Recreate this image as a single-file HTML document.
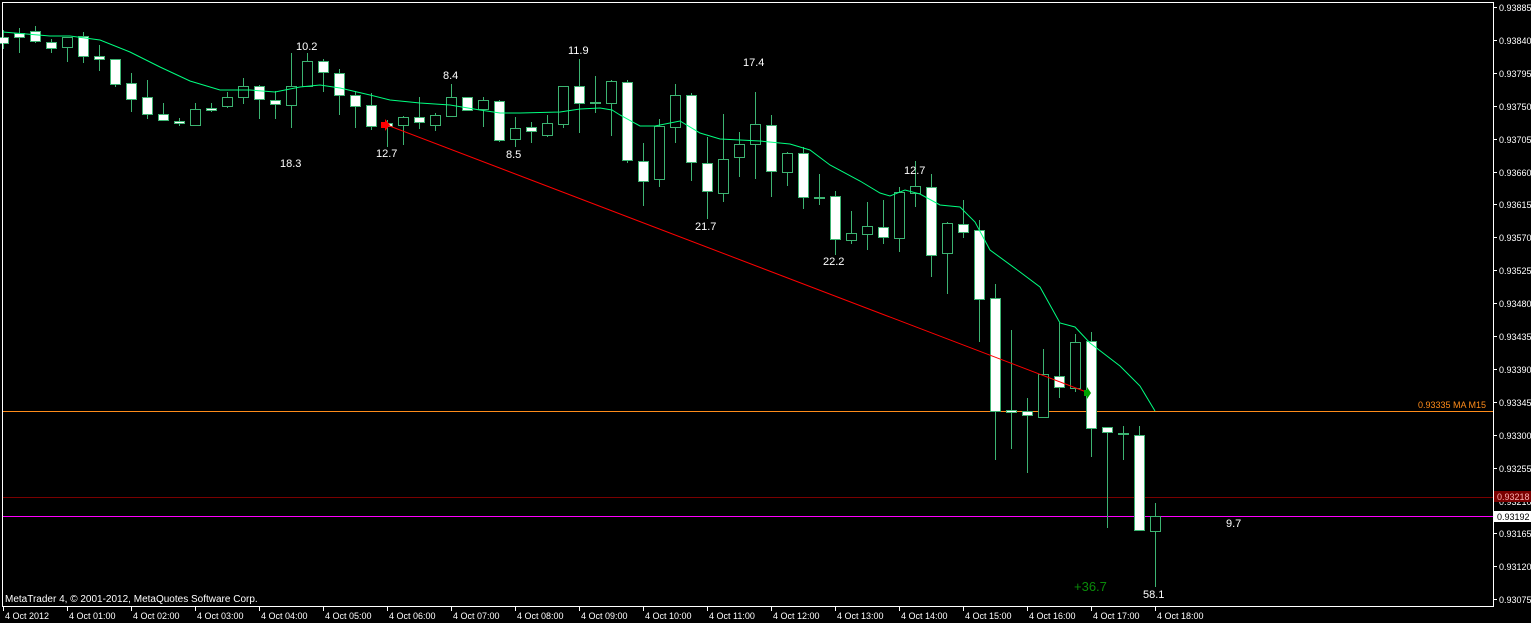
<!DOCTYPE html>
<html><head><meta charset="utf-8"><style>
html,body{margin:0;padding:0;background:#000;width:1531px;height:623px;overflow:hidden}
svg{display:block}
text{font-family:"Liberation Sans",sans-serif;}
</style></head><body>
<svg id="s" width="1531" height="623" xmlns="http://www.w3.org/2000/svg">
<rect width="1531" height="623" fill="#000"/>
<line x1="2" y1="411.5" x2="1493" y2="411.5" stroke="#ff8c1a" stroke-width="1"/>
<line x1="2" y1="497.5" x2="1493" y2="497.5" stroke="#7a0000" stroke-width="1"/>
<line x1="2" y1="516.5" x2="1493" y2="516.5" stroke="#ff00ff" stroke-width="1"/>
<g id="c"></g>
<polyline fill="none" stroke="#00ff80" stroke-width="1" points="3,32 50,36 70,36 100,40 130,52 160,67 190,81 220,90 250,90 275,92 300,87 320,85 340,88 370,95 390,100 420,103 450,105 480,110 500,113 520,113 560,112 580,109 600,108 612,110 620,115 640,126 655,126 680,121 700,133 720,139 740,140 760,141 790,144 810,150 830,165 860,181 880,193 890,196 905,190 920,194 940,205 960,207 975,222 990,250 1020,272 1040,287 1060,323 1075,327 1090,343 1120,366 1140,386 1155,411"/>
<line x1="387" y1="125" x2="1089" y2="393" stroke="#ff0000" stroke-width="1"/>
<path d="M381 122h4v-3l5 6-5 6v-3h-4z" fill="#ff0000"/>
<path d="M1084 390h3v-3l4 6-4 6v-3h-3z" fill="#00a000"/>
<g fill="#fff" font-size="11">
<text x="296" y="50">10.2</text><text x="280" y="167">18.3</text><text x="376" y="157">12.7</text>
<text x="443" y="79">8.4</text><text x="506" y="158">8.5</text><text x="568" y="54">11.9</text>
<text x="743" y="66">17.4</text><text x="695" y="230">21.7</text><text x="904" y="174">12.7</text>
<text x="823" y="265">22.2</text><text x="1226" y="527">9.7</text><text x="1143" y="598">58.1</text>
</g>
<text x="1074" y="591" fill="#0a8a0a" font-size="13">+36.7</text>
<text x="1418" y="408" fill="#ff8c1a" font-size="9">0.93335 MA M15</text>
<text x="5" y="602" fill="#fff" font-size="10">MetaTrader 4, © 2001-2012, MetaQuotes Software Corp.</text>
<rect x="2.5" y="2.5" width="1491" height="604" fill="none" stroke="#fff" stroke-width="1"/>
<g id="ax" fill="#fff" font-size="9"></g>
<rect x="1494" y="491" width="37" height="11" fill="#7a0000"/>
<text x="1497" y="500" fill="#ffb0b0" font-size="9">0.93218</text>
<rect x="1494" y="511" width="37" height="11" fill="#fff"/>
<text x="1497" y="520" fill="#000" font-size="9">0.93192</text>
</svg>
<script>
var d=[[37,43,30,49,1],[33,37,28,53,1],[31,41,26,43,1],[42,48,39,53,1],[37,47,37,62,0],[36,56,32,63,1],[56,59,45,71,1],[59,84,59,87,1],[83,99,73,112,1],[97,114,80,119,1],[114,120,103,121,1],[121,123,118,126,1],[109,125,103,126,0],[108,110,103,112,1],[97,106,92,108,0],[86,97,78,104,0],[86,99,85,119,1],[100,104,91,119,1],[86,105,53,128,0],[61,86,53,86,0],[61,72,59,92,1],[73,95,69,115,1],[95,106,91,128,1],[105,126,93,130,1],[123,126,120,147,1],[117,125,116,145,0],[117,122,97,129,1],[115,125,113,131,0],[97,116,84,117,0],[97,110,97,111,1],[100,109,97,127,0],[101,140,100,142,1],[128,139,117,147,0],[127,131,122,143,1],[123,135,115,137,0],[86,124,86,128,0],[86,103,59,133,1],[102,104,76,113,2],[81,103,80,136,0],[82,160,80,163,1],[161,181,143,206,1],[126,179,119,187,0],[95,127,84,143,0],[95,162,93,181,1],[163,191,137,219,1],[159,193,114,202,0],[144,157,132,177,0],[124,144,92,179,0],[125,171,115,197,1],[153,172,152,186,0],[153,197,147,209,1],[197,198,174,205,2],[196,239,191,255,1],[233,240,211,244,0],[226,234,202,250,0],[227,237,200,244,1],[192,238,187,252,0],[186,193,161,207,0],[187,255,174,277,1],[223,253,222,294,0],[224,232,200,238,1],[230,299,220,342,1],[298,411,284,460,1],[410,412,330,449,1],[411,415,398,473,1],[374,417,349,417,0],[376,387,323,398,1],[342,388,334,392,0],[341,428,332,457,1],[427,432,427,528,1],[433,434,426,460,2],[435,530,426,531,1],[516,531,503,587,0]];
var g=document.getElementById('c'),h='',G='#3cb371';
d.forEach(function(c,i){var x=3+16*i;
h+='<line x1="'+(x+.5)+'" y1="'+c[2]+'" x2="'+(x+.5)+'" y2="'+c[3]+'" stroke="'+G+'"/>';
if(c[4]==2)h+='<rect x="'+(x-5)+'" y="'+c[0]+'" width="11" height="2" fill="'+G+'"/>';
else h+='<rect x="'+(x-4.5)+'" y="'+(c[0]+.5)+'" width="10" height="'+Math.max(1,c[1]-c[0])+'" fill="'+(c[4]?'#fff':'#000')+'" stroke="'+G+'"/>';});
g.innerHTML=h;
var a=document.getElementById('ax'),t='',p=['0.93885','0.93840','0.93795','0.93750','0.93705','0.93660','0.93615','0.93570','0.93525','0.93480','0.93435','0.93390','0.93345','0.93300','0.93255','0.93210','0.93165','0.93120','0.93075'];
p.forEach(function(s,i){var y=Math.round(7+i*32.9);t+='<rect x="1494" y="'+y+'" width="3" height="1"/><text x="1499" y="'+(y+4)+'">'+s+'</text>';});
var L=['4 Oct 2012','4 Oct 01:00','4 Oct 02:00','4 Oct 03:00','4 Oct 04:00','4 Oct 05:00','4 Oct 06:00','4 Oct 07:00','4 Oct 08:00','4 Oct 09:00','4 Oct 10:00','4 Oct 11:00','4 Oct 12:00','4 Oct 13:00','4 Oct 14:00','4 Oct 15:00','4 Oct 16:00','4 Oct 17:00','4 Oct 18:00'];
L.forEach(function(s,i){var x=3+64*i;t+='<rect x="'+x+'" y="607" width="1" height="4"/><text x="'+(x+2)+'" y="619">'+s+'</text>';});
a.innerHTML=t;
</script>
</body></html>
